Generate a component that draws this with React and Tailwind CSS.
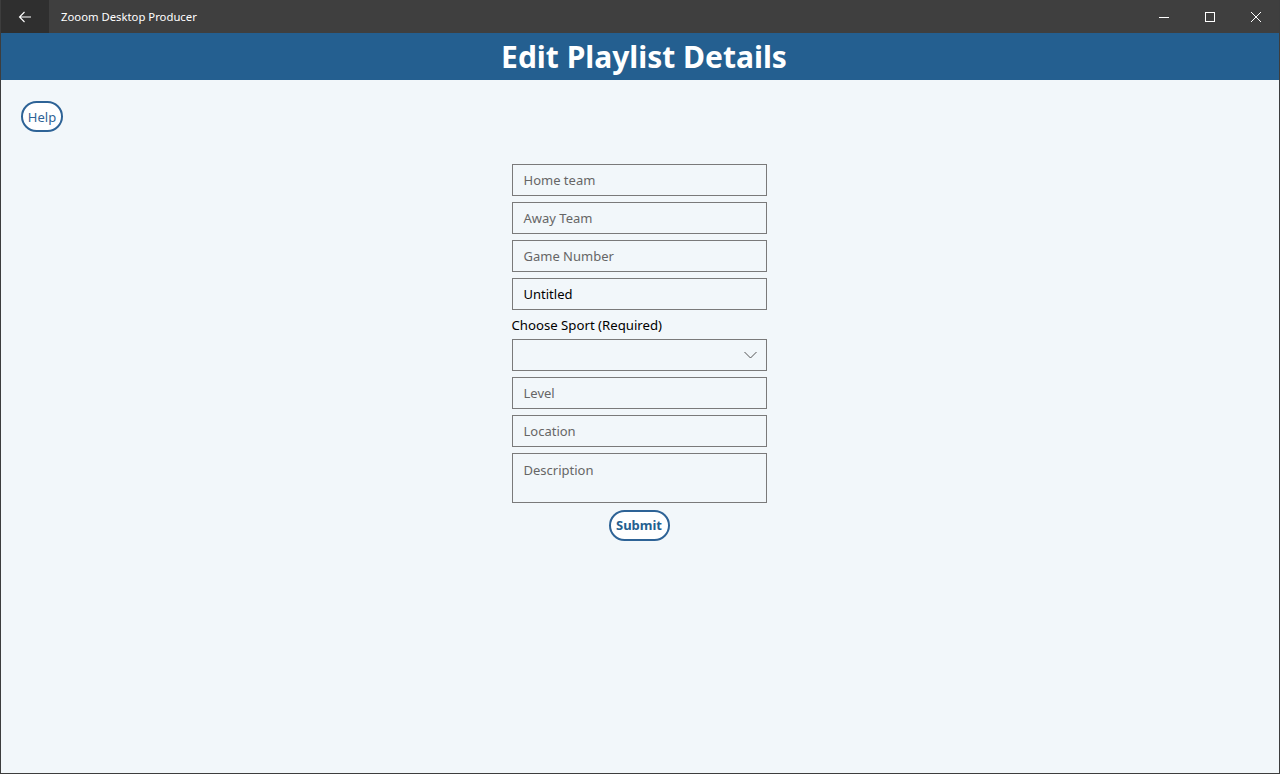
import React from "react";

const font = { fontFamily: '"Noto Sans", "Open Sans", "Liberation Sans", sans-serif' };

function Field({ placeholder, value, tall }) {
  return (
    <div
      className={`w-[255px] ${tall ? "h-[50px] items-start pt-[7px]" : "h-[32px] items-center pt-[2px]"} flex border border-[#7a7a7a] bg-transparent pl-[11px] pr-[10px] text-[13px] ${value ? "text-black" : "text-[#666666]"}`}
    >
      {value || placeholder}
    </div>
  );
}

export default function App() {
  return (
    <div className="w-[1280px] h-[774px] flex flex-col bg-[#f2f7fa] border-x border-b border-[#3d3d3d] overflow-hidden" style={font}>
      <div className="h-[33px] flex items-stretch bg-[#3f3f3f] text-white">
        <div className="w-[48px] bg-[#2f2f2f] flex items-center justify-center">
          <svg width="14" height="12" viewBox="0 0 14 12" fill="none" stroke="white" strokeWidth="1.1">
            <path d="M13 6H1.5M6.5 1L1.5 6l5 5" />
          </svg>
        </div>
        <div className="pl-[12px] flex items-center text-[11.3px] pt-[1px]">Zooom Desktop Producer</div>
        <div className="flex-1" />
        <div className="w-[46px] flex items-center justify-center">
          <svg width="12" height="12" viewBox="0 0 12 12" stroke="white" strokeWidth="1"><path d="M1 6.5h10" /></svg>
        </div>
        <div className="w-[46px] flex items-center justify-center">
          <svg width="12" height="12" viewBox="0 0 12 12" fill="none" stroke="white" strokeWidth="1"><rect x="1.5" y="1.5" width="9" height="9" /></svg>
        </div>
        <div className="w-[46px] flex items-center justify-center">
          <svg width="12" height="12" viewBox="0 0 12 12" stroke="white" strokeWidth="1"><path d="M1 1l10 10M11 1L1 11" /></svg>
        </div>
      </div>
      <div className="h-[47px] bg-[#245f90] flex items-center justify-center text-white text-[30px] font-bold leading-none pl-[8px]">
        Edit Playlist Details
      </div>
      <div className="flex-1 relative">
        <div className="pt-[21px] pl-[20px]">
          <button className="w-[42px] h-[31px] rounded-full border-2 border-[#2e6396] bg-white text-[#2e6396] text-[13px] flex items-center justify-center pt-[2px]">
            Help
          </button>
        </div>
        <div className="flex flex-col items-center mt-[32px] gap-[6px] pr-[2px]">
          <Field placeholder="Home team" />
          <Field placeholder="Away Team" />
          <Field placeholder="Game Number" />
          <Field value="Untitled" />
          <div className="w-[255px] flex flex-col gap-[4px]">
            <div className="text-[13.2px] text-black leading-[19px]">Choose Sport (Required)</div>
            <div className="w-[255px] h-[32px] border border-[#7a7a7a] flex items-center justify-end pr-[9px]">
              <svg width="13" height="8" viewBox="0 0 13 8" fill="none" stroke="#555" strokeWidth="1"><path d="M0.5 1l6 6 6-6" /></svg>
            </div>
          </div>
          <Field placeholder="Level" />
          <Field placeholder="Location" />
          <Field placeholder="Description" tall />
          <button className="mt-[1px] w-[61px] h-[31px] rounded-full border-2 border-[#2e6396] bg-white text-[#245f90] text-[13px] font-bold flex items-center justify-center pt-[1px]">
            Submit
          </button>
        </div>
      </div>
    </div>
  );
}
